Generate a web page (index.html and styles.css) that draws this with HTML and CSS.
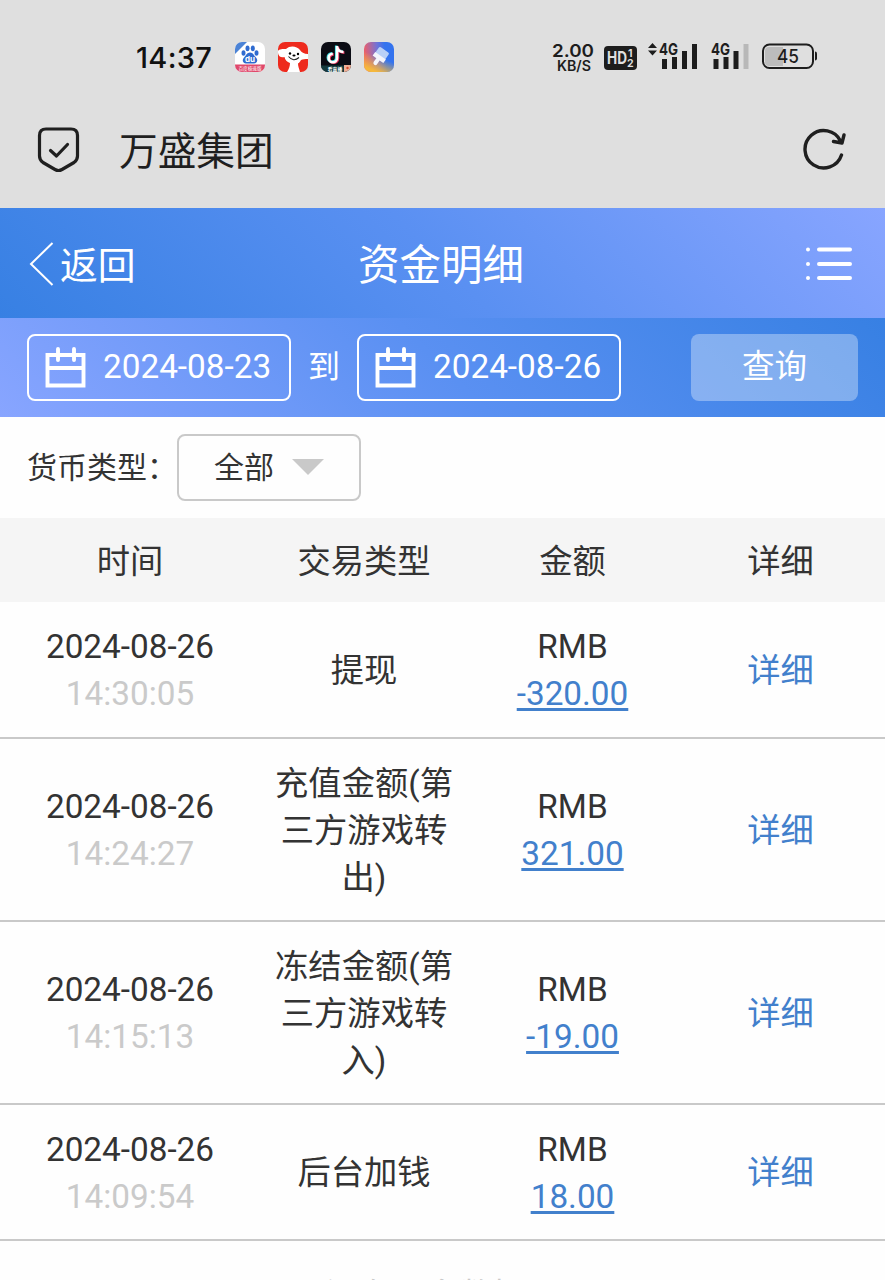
FILE: index.html
```html
<!DOCTYPE html>
<html lang="zh-CN">
<head>
<meta charset="utf-8">
<title>资金明细</title>
<link rel="stylesheet" href="styles.css">
</head>
<body>
<div class="screen">
  <div class="status">
    <span class="clock">14:37</span>
    <div class="apps">
      <svg class="app" viewBox="0 0 30 30">
        <defs><clipPath id="tile"><rect width="30" height="30" rx="7"/></clipPath></defs>
        <g clip-path="url(#tile)">
          <rect width="30" height="30" fill="#fff"/>
          <path d="M0 0H12L0 12Z" fill="#4b83d6"/>
          <g fill="#2f6bd0"><ellipse cx="8.500" cy="11" rx="2" ry="2.800"/><ellipse cx="12.500" cy="6.300" rx="2" ry="2.900"/><ellipse cx="17.800" cy="6.300" rx="2" ry="2.900"/><ellipse cx="21.500" cy="11" rx="2" ry="2.800"/><path d="M15 10.500c3 0 4 3 6 5 2.500 2.500 1 6-2 6h-8c-3 0-4.500-3.500-2-6 2-2 3-5 6-5Z"/></g>
          <text x="15" y="20" font-size="8" class="bold" text-anchor="middle" fill="#fff">du</text>
          <path d="M0 22.500h30V30H0Z" fill="#e0486b"/>
          <text x="15" y="28" font-size="4.600" text-anchor="middle" fill="#fff">百度极速版</text>
        </g>
      </svg>
      <svg class="app" viewBox="0 0 30 30">
        <g clip-path="url(#tile)">
          <rect width="30" height="30" fill="#ee2a1d"/>
          <path d="M0 9c1-2 5-2 8-2 4-4 11-3 14 1 1 2 4 4 8 4v5c-3 0-5 0-7 1-1 2-2 3-3 3.500 0 3 1 5 2 8.500H9c2-3 3-6 3-9-3-1-5-3-5.500-6-4 1-7-1-6.500-6Z" fill="#fff"/>
          <circle cx="12" cy="11.500" r="1.200"/><circle cx="20" cy="12" r="1.200"/><ellipse cx="16" cy="13.500" rx="1.600" ry="1"/>
          <path d="M10.500 14.500q5 6 10.500 1" stroke="#222" stroke-width="1.100" fill="none"/>
        </g>
      </svg>
      <svg class="app" viewBox="0 0 30 30">
        <g clip-path="url(#tile)">
          <rect width="30" height="30" fill="#0b0c14"/>
          <g fill="none" stroke-width="2.600"><path d="M16 4v12a4.200 4.200 0 1 1-4.200-4.200M16 5c1 4 3 5 6.500 5" stroke="#35dbe0" transform="translate(-.8 -.6)"/><path d="M16 4v12a4.200 4.200 0 1 1-4.200-4.200M16 5c1 4 3 5 6.500 5" stroke="#ec3763" transform="translate(.9 .6)"/><path d="M16 4v12a4.200 4.200 0 1 1-4.200-4.200M16 5c1 4 3 5 6.500 5" stroke="#fff"/></g>
          <path d="M0 23.500h24V30H0Z" fill="#153b3e"/>
          <text x="14" y="28.500" font-size="4.800" class="bold" text-anchor="middle" fill="#fff">看直播</text>
          <path d="M23 23h7v7h-7Z" fill="#efb097"/><circle cx="26.500" cy="26" r="1.200" fill="#d2492b"/>
        </g>
      </svg>
      <svg class="app" viewBox="0 0 30 30">
        <defs>
          <linearGradient id="sky" x1="0" y1=".3" x2="1" y2=".2"><stop offset="0" stop-color="#ef5e68"/><stop offset=".45" stop-color="#6f73d8"/><stop offset=".7" stop-color="#3473ee"/></linearGradient>
          <linearGradient id="sun" x1=".7" y1="0" x2=".3" y2="1"><stop offset=".5" stop-color="#f5b83c" stop-opacity="0"/><stop offset=".95" stop-color="#f5b83c"/></linearGradient>
        </defs>
        <g clip-path="url(#tile)">
          <rect width="30" height="30" fill="url(#sky)"/><rect width="30" height="30" fill="url(#sun)"/>
          <g transform="rotate(35 15 15)"><rect x="9.500" y="6" width="12" height="9" rx="1.500" fill="#b9d0f7"/><path d="M9 13h13v4.500h-4.500v4.500a2 2 0 0 1-4 0v-4.500H9Z" fill="#f4f4fb"/></g>
        </g>
      </svg>
    </div>
    <svg class="signals" viewBox="0 0 280 40">
      <g fill="#1d1d1d">
        <text x="12" y="18" font-size="17.500" class="semi" textLength="42" lengthAdjust="spacingAndGlyphs">2.00</text>
        <text x="17" y="32" font-size="14" class="semi" textLength="34" lengthAdjust="spacingAndGlyphs">KB/S</text>
        <rect x="64" y="7" width="33" height="24" rx="4"/>
        <text x="67" y="25" font-size="17" class="bold" fill="#dfdfdf" textLength="20" lengthAdjust="spacingAndGlyphs">HD</text>
        <text x="88" y="18" font-size="10.500" class="bold" fill="#dfdfdf">1</text>
        <text x="87" y="28" font-size="10.500" class="bold" fill="#dfdfdf">2</text>
        <path d="M108 9h9l-4.500-5ZM108 11.500h9l-4.500 5Z"/>
        <text x="119" y="16" font-size="16" class="bold" textLength="19" lengthAdjust="spacingAndGlyphs">4G</text>
        <path d="M122 20h5v10h-5ZM132 18h5v12h-5ZM142 12h5v18h-5ZM152 5h5v25h-5Z"/>
        <text x="171" y="16" font-size="16" class="bold" textLength="19" lengthAdjust="spacingAndGlyphs">4G</text>
        <path d="M173.500 20h5v10h-5ZM183.500 18h5v12h-5ZM193.500 12h5v18h-5Z"/>
        <path d="M203.500 5h5v25h-5Z" fill="#b8b8b8"/>
        <path d="M229 8h14v19h-14a4 4 0 0 1-4-4V12a4 4 0 0 1 4-4Z" fill="#bcbcbc"/>
        <rect x="223" y="5.500" width="50" height="23.500" rx="6.500" fill="none" stroke="#1d1d1d" stroke-width="2"/>
        <path d="M275 12.500q2 0 2 2v5q0 2-2 2Z"/>
        <text x="237" y="24" font-size="18.500" class="medium" textLength="22" lengthAdjust="spacingAndGlyphs">45</text>
      </g>
    </svg>
  </div>

  <div class="browser-bar">
    <svg class="shield" viewBox="0 0 44 48"><g fill="none" stroke="#1f1f1f" stroke-width="3.200" stroke-linecap="round" stroke-linejoin="round"><path d="M9 3H34Q40.500 3 40.500 9.500V30Q40.500 34 37 36.500L25 43.500Q21.500 45.500 18 43.500L6 36.500Q2.500 34 2.500 30V9.500Q2.500 3 9 3Z"/><path d="M13.500 24.500l6 5.500 11-11.500"/></g></svg>
    <span class="site">万盛集团</span>
    <svg class="reload" viewBox="0 0 44 44"><g fill="none" stroke="#1f1f1f" stroke-width="3.400" stroke-linecap="round" stroke-linejoin="round"><path d="M38.500 27A18.700 18.700 0 1 1 37.500 13M41 7l-2 8-8.500-1.500"/></g></svg>
  </div>

  <header class="nav">
    <div class="back">
      <svg class="chevron" viewBox="0 0 26 46"><path d="M23.500 2L2 23l21.500 21" fill="none" stroke="#fff" stroke-width="2"/></svg>
      <span>返回</span>
    </div>
    <h1 class="title">资金明细</h1>
    <svg class="menu" viewBox="0 0 48 36"><path d="M14 4.500h31M14 19h31M14 33h31" stroke="#fff" stroke-width="4" stroke-linecap="round"/><g fill="#fff"><circle cx="3" cy="4.500" r="2"/><circle cx="3" cy="19" r="2"/><circle cx="3" cy="33" r="2"/></g></svg>
  </header>

  <div class="filter">
    <div class="date">
      <svg class="calendar" viewBox="0 0 41 41"><path d="M2.500 8h36v30.500h-36ZM2.500 21h36M13 2v11M29 2v11" fill="none" stroke="#fff" stroke-width="3.900" stroke-linecap="round"/></svg>
      <span>2024-08-23</span>
    </div>
    <span class="to">到</span>
    <div class="date">
      <svg class="calendar" viewBox="0 0 41 41"><path d="M2.500 8h36v30.500h-36ZM2.500 21h36M13 2v11M29 2v11" fill="none" stroke="#fff" stroke-width="3.900" stroke-linecap="round"/></svg>
      <span>2024-08-26</span>
    </div>
    <button class="query">查询</button>
  </div>

  <div class="currency">
    <span class="currency-label">货币类型：</span>
    <div class="select"><span>全部</span><i class="caret"></i></div>
  </div>

  <div class="row head"><span>时间</span><span>交易类型</span><span>金额</span><span>详细</span></div>
  <div class="row">
    <div>2024-08-26<br><span class="time">14:30:05</span></div><div>提现</div>
    <div>RMB<br><a class="amount">-320.00</a></div><a class="detail">详细</a>
  </div>
  <div class="row tall">
    <div>2024-08-26<br><span class="time">14:24:27</span></div><div>充值金额(第三方游戏转出)</div>
    <div>RMB<br><a class="amount">321.00</a></div><a class="detail">详细</a>
  </div>
  <div class="row tall">
    <div>2024-08-26<br><span class="time">14:15:13</span></div><div>冻结金额(第三方游戏转入)</div>
    <div>RMB<br><a class="amount">-19.00</a></div><a class="detail">详细</a>
  </div>
  <div class="row">
    <div>2024-08-26<br><span class="time">14:09:54</span></div><div>后台加钱</div>
    <div>RMB<br><a class="amount">18.00</a></div><a class="detail">详细</a>
  </div>
  <div class="end">没有更多数据了</div>
</div>
</body>
</html>
```
FILE: styles.css
```css
* { box-sizing: border-box; }
body { margin: 0; background: #fff; }
.screen {
  width: 885px;
  height: 1280px;
  overflow: hidden;
  background: #fefefe;
  color: #333;
  font-family: Roboto, "Noto Sans CJK SC", sans-serif;
  font-size: 33.3px;
  line-height: 47px;
}
svg { display: block; flex: none; }
.semi { font-weight: 600; }
.bold { font-weight: 700; }
.medium { font-weight: 500; }

.status {
  height: 92px;
  padding: 38px 65px 0 136px;
  display: flex;
  align-items: flex-start;
  background: #dfdfdf;
  font-family: Inter, "Noto Sans CJK SC", sans-serif;
}
.clock {
  width: 99px;
  color: #111;
  font-size: 29px;
  font-weight: 500;
  line-height: 39px;
  letter-spacing: 0.3px;
}
.apps { display: flex; gap: 13px; padding-top: 4px; }
.app { width: 30px; height: 30px; }
.signals { width: 280px; height: 40px; margin-top: 1px; margin-left: auto; }

.browser-bar {
  height: 116px;
  padding: 0 38px 0 37px;
  display: flex;
  align-items: center;
  background: #dfdfdf;
  color: #1f1f1f;
}
.shield { width: 44px; height: 48px; }
.site { margin: 4px 0 0 38px; font-size: 38.7px; line-height: 58px; }
.reload { width: 44px; height: 44px; margin-left: auto; }

.nav {
  height: 110px;
  padding: 0 32px 0 29px;
  display: grid;
  grid-template-columns: 1fr auto 1fr;
  align-items: center;
  background: linear-gradient(45deg, #3780e3, #5a90f2 50%, #88a5ff);
  color: #fff;
}
.back { display: flex; align-items: center; gap: 5px; padding-top: 2px; font-size: 37.8px; }
.back span { margin-top: 5px; }
.chevron { width: 26px; height: 46px; }
.title { margin: 6px 0 0; font-size: 41.5px; font-weight: 400; line-height: 60px; }
.menu { width: 48px; height: 36px; justify-self: end; }

.filter {
  height: 99px;
  padding: 0 27px;
  display: flex;
  align-items: center;
  background: linear-gradient(45deg, #88a5ff, #5a90f2 50%, #3780e3);
  color: #fff;
}
.date {
  width: 264px;
  height: 67px;
  padding-left: 16px;
  display: flex;
  align-items: center;
  gap: 17px;
  border: 2.500px solid #fff;
  border-radius: 8px;
}
.date span { margin-top: -2px; }
.calendar { width: 41px; height: 41px; }
.to { width: 66px; text-align: center; font-size: 32px; }
.query {
  width: 167px;
  height: 67px;
  margin-left: auto;
  padding: 0;
  border: 0;
  border-radius: 8px;
  background: rgba(255, 255, 255, 0.34);
  color: #fff;
  font: inherit;
  font-size: 32.5px;
}

.currency { height: 101px; padding-left: 27px; display: flex; align-items: center; font-size: 30px; }
.currency-label { width: 150px; white-space: nowrap; }
.select {
  width: 184px;
  height: 67px;
  padding-left: 35px;
  display: flex;
  align-items: center;
  gap: 18px;
  border: 2px solid #c9c9c9;
  border-radius: 8px;
}
.caret { margin-top: -1px; border: 16.500px solid transparent; border-top-color: #c9c9c9; border-bottom: 0; }

.row {
  height: 136.5px;
  padding-top: 2px;
  display: grid;
  grid-template-columns: 260px 208px 209px 207px;
  align-items: center;
  border-bottom: 2px solid #c9c9c9;
  text-align: center;
}
.row.tall { height: 183px; }
.row.head { height: 84px; border: 0; background: #f5f5f5; }
.time { color: #cacaca; }
.amount, .detail { color: #4280cc; }
.amount { text-decoration: underline; text-decoration-thickness: 3px; text-underline-offset: 3px; }
.end { padding-top: 31px; text-align: center; color: #c9c9c9; }
```
